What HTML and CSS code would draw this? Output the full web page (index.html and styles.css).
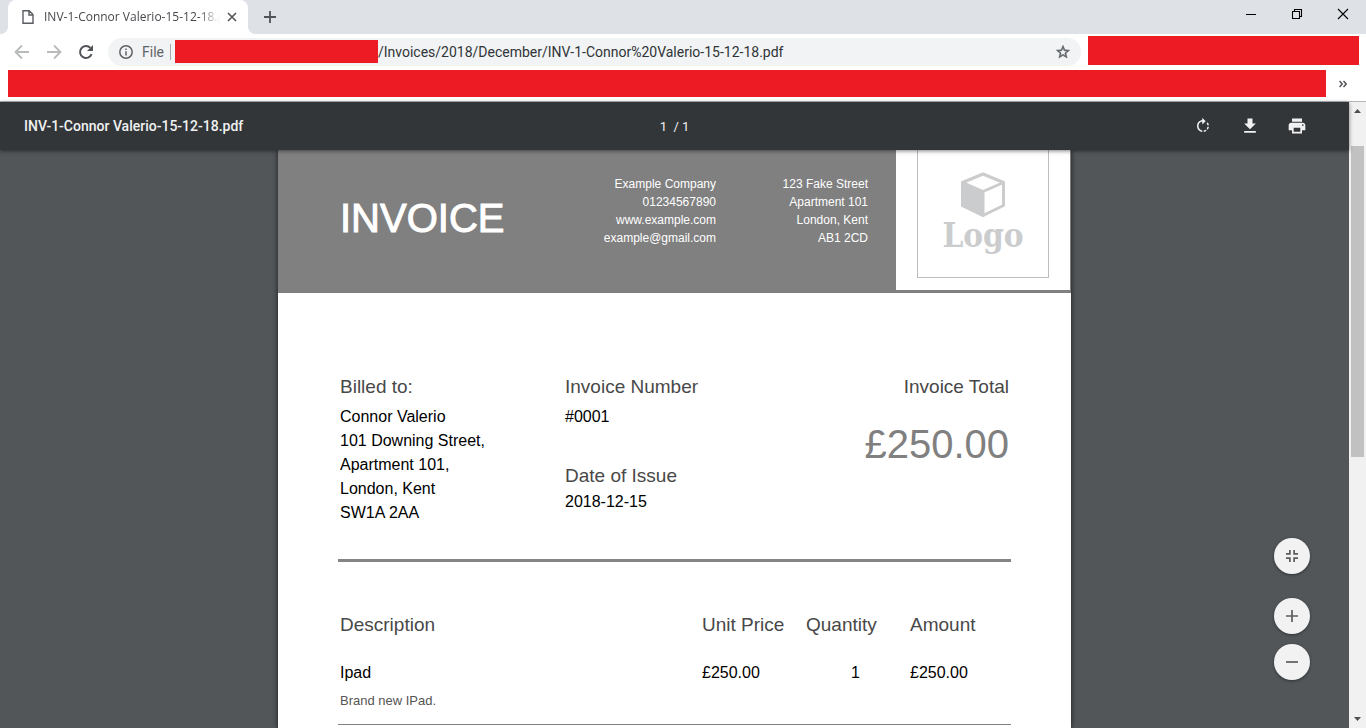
FILE: index.html
```html
<!DOCTYPE html>
<html lang="en">
<head>
<meta charset="utf-8">
<title>INV-1-Connor Valerio-15-12-18.pdf</title>
<link rel="stylesheet" href="styles.css">
</head>
<body class="browser">
<header class="tabstrip">
  <div class="tab">
    <svg class="tab-icon" width="12" height="14" viewBox="0 0 12 14" fill="none" stroke="#5a5d61" stroke-width="1.4"><path d="M1 .8h6.2L11 4.6v8.6H1zM7 1v4h4"/></svg>
    <span class="tab-title">INV-1-Connor Valerio-15-12-18.pdf</span>
    <button class="icon-btn tab-close" aria-label="Close tab"><svg width="10" height="10" viewBox="0 0 10 10" stroke="#55585c" stroke-width="1.7"><path d="M1 1l8 8M9 1l-8 8"/></svg></button>
  </div>
  <button class="icon-btn new-tab" aria-label="New tab"><svg width="12" height="12" viewBox="0 0 12 12" stroke="#505357" stroke-width="1.8"><path d="M6 0v12M0 6h12"/></svg></button>
  <div class="window-controls">
    <button class="icon-btn" aria-label="Minimise"><svg width="12" height="12" viewBox="0 0 12 12" stroke="#000"><path d="M1 6.5h10"/></svg></button>
    <button class="icon-btn" aria-label="Restore"><svg width="12" height="12" viewBox="0 0 12 12" fill="none" stroke="#000" stroke-width="1.1"><path d="M1.5 3.5h7v7h-7zM3.5 3.500V1.500h7v7h-2"/></svg></button>
    <button class="icon-btn" aria-label="Close window"><svg width="12" height="12" viewBox="0 0 12 12" stroke="#000" stroke-width="1.1"><path d="M1 1l10 10M11 1L1 11"/></svg></button>
  </div>
</header>
<nav class="toolbar">
  <button class="icon-btn nav-btn" aria-label="Back"><svg width="16" height="16" viewBox="0 0 16 16" fill="none" stroke="#b9babc" stroke-width="1.8"><path d="M15 8H2M8 1.500L1.500 8 8 14.500"/></svg></button>
  <button class="icon-btn nav-btn" aria-label="Forward"><svg width="16" height="16" viewBox="0 0 16 16" fill="none" stroke="#b9babc" stroke-width="1.8"><path d="M1 8h13M8 1.500L14.500 8 8 14.500"/></svg></button>
  <button class="icon-btn nav-btn" aria-label="Reload"><svg width="16" height="16" viewBox="0 0 16 16" fill="none" stroke="#505357" stroke-width="2"><path d="M13.600 10.200A6 6 0 1 1 12.400 3.900"/><path d="M15 1v6H9z" fill="#505357" stroke="none"/></svg></button>
  <div class="omnibox">
    <svg width="14" height="14" viewBox="0 0 14 14" fill="none" stroke="#5f6368" stroke-width="1.5"><circle cx="7" cy="7" r="6.200"/><path d="M7 6.200v4.200M7 3.500v1.500"/></svg>
    <span class="scheme">File</span>
    <span class="divider"></span>
    <span class="redaction redaction-url"></span>
    <input class="url" type="text" aria-label="Address" value="/Invoices/2018/December/INV-1-Connor%20Valerio-15-12-18.pdf">
    <button class="icon-btn star" aria-label="Bookmark this page"><svg width="16" height="16" viewBox="0 0 24 24" fill="#5f6368" stroke="#5f6368" stroke-width=".8"><path d="M22 9.240l-7.190-.62L12 2 9.190 8.630 2 9.240l5.460 4.730L5.820 21 12 17.270 18.180 21l-1.630-7.030L22 9.240zM12 15.400l-3.760 2.270 1-4.280-3.320-2.880 4.380-.38L12 6.100l1.710 4.040 4.380.38-3.320 2.880 1 4.280L12 15.400z"/></svg></button>
  </div>
  <div class="redaction redaction-extensions"></div>
</nav>
<nav class="bookmarks">
  <div class="redaction redaction-bookmarks"></div>
  <button class="icon-btn more" aria-label="More bookmarks"><svg width="8" height="8" viewBox="0 0 8 8" fill="none" stroke="#505357" stroke-width="1.500"><path d="M.5 1l2.700 3L.5 7M4.500 1l2.700 3-2.700 3"/></svg></button>
</nav>
<div class="content">
  <div class="viewer">
    <header class="pdf-bar">
      <h1 class="pdf-title">INV-1-Connor Valerio-15-12-18.pdf</h1>
      <span class="page-count">1&nbsp; /&nbsp;1</span>
      <div class="pdf-actions">
        <button class="icon-btn pdf-btn" aria-label="Rotate"><svg width="18" height="18" viewBox="0 0 24 24" fill="#f1f1f1"><path d="M15.550 5.550L11 1v3.070C7.060 4.560 4 7.920 4 12s3.050 7.440 7 7.930v-2.020c-2.840-.48-5-2.940-5-5.910s2.160-5.430 5-5.910V10l4.550-4.450zM19.930 11c-.17-1.390-.72-2.730-1.620-3.890l-1.420 1.420c.54.75.88 1.600 1.020 2.470h2.020zM13 17.900v2.020c1.390-.17 2.740-.71 3.900-1.610l-1.440-1.440c-.75.54-1.590.89-2.460 1.030zm3.890-2.420l1.420 1.410c.9-1.160 1.450-2.500 1.620-3.890h-2.020c-.14.870-.48 1.720-1.020 2.480z"/></svg></button>
        <button class="icon-btn pdf-btn" aria-label="Download"><svg width="20" height="20" viewBox="0 0 24 24" fill="#f1f1f1"><path d="M19 9h-4V3H9v6H5l7 7 7-7zM5 18v2h14v-2H5z"/></svg></button>
        <button class="icon-btn pdf-btn" aria-label="Print"><svg width="20" height="20" viewBox="0 0 24 24" fill="#f1f1f1"><path d="M19 8H5c-1.660 0-3 1.340-3 3v6h4v4h12v-4h4v-6c0-1.660-1.340-3-3-3zm-3 11H8v-5h8v5zm3-7c-.55 0-1-.45-1-1s.45-1 1-1 1 .45 1 1-.45 1-1 1zm-1-9H6v4h12V3z"/></svg></button>
      </div>
    </header>
    <main class="stage">
      <article class="sheet">
        <header class="banner">
          <h2 class="banner-title">INVOICE</h2>
          <address class="contact">Example Company<br>01234567890<br>www.example.com<br>example@gmail.com</address>
          <address class="contact contact-address">123 Fake Street<br>Apartment 101<br>London, Kent<br>AB1 2CD</address>
          <div class="logo">
            <div class="logo-frame">
              <svg width="46" height="46" viewBox="0 0 46 46" fill="none" stroke="#cbccce" stroke-width="3" stroke-linejoin="round"><path d="M23 2L43.500 10.500V33.500L23 43.500 2.500 33.500V10.500z"/><path d="M23 19.500l20.500-9"/><path d="M2.500 10.500l20.500 9V43.500L2.500 33.500z" fill="#cbccce"/></svg>
              <span class="logo-text">Logo</span>
            </div>
          </div>
        </header>
        <section class="summary">
          <div>
            <h3 class="label">Billed to:</h3>
            <p class="value">Connor Valerio<br>101 Downing Street,<br>Apartment 101,<br>London, Kent<br>SW1A 2AA</p>
          </div>
          <div>
            <h3 class="label">Invoice Number</h3>
            <p class="value">#0001</p>
            <h3 class="label label-date">Date of Issue</h3>
            <p class="value value-date">2018-12-15</p>
          </div>
          <div class="total">
            <h3 class="label">Invoice Total</h3>
            <p class="total-amount">£250.00</p>
          </div>
        </section>
        <table class="items">
          <thead>
            <tr><th class="col-desc">Description</th><th class="col-price">Unit Price</th><th class="col-qty">Quantity</th><th class="col-amount">Amount</th></tr>
          </thead>
          <tbody>
            <tr><td>Ipad<p class="note">Brand new IPad.</p></td><td>£250.00</td><td class="qty">1</td><td>£250.00</td></tr>
          </tbody>
        </table>
      </article>
    </main>
    <div class="zoom-controls">
      <button class="zoom-btn zoom-fit" aria-label="Fit to page"><svg width="12" height="12" viewBox="0 0 12 12" fill="none" stroke="#5c5c5c" stroke-width="1.700"><path d="M0 3.900h3.900V0M8.100 0v3.900H12M0 8.100h3.900V12M8.100 12V8.100H12"/></svg></button>
      <button class="zoom-btn" aria-label="Zoom in"><svg width="12" height="12" viewBox="0 0 12 12" stroke="#5c5c5c" stroke-width="1.700"><path d="M6 0v12M0 6h12"/></svg></button>
      <button class="zoom-btn" aria-label="Zoom out"><svg width="12" height="12" viewBox="0 0 12 12" stroke="#5c5c5c" stroke-width="1.700"><path d="M0 6h12"/></svg></button>
    </div>
  </div>
  <div class="scrollbar">
    <svg width="17" height="17" viewBox="0 0 17 17" fill="#505050"><path d="M5 11l3.500-4 3.500 4z"/></svg>
    <div class="track"><div class="thumb"></div></div>
    <svg width="17" height="17" viewBox="0 0 17 17" fill="#505050"><path d="M5 6l3.500 4L12 6z"/></svg>
  </div>
</div>
</body>
</html>
```
FILE: styles.css
```css
* { box-sizing: border-box; }
h1, h2, h3, p { margin: 0; font-weight: 400; }
svg { display: block; flex: none; }

.browser {
  margin: 0;
  height: 100vh;
  display: flex;
  flex-direction: column;
  overflow: hidden;
  background: #fff;
  font-family: "Open Sans", "Noto Sans", sans-serif;
}
.icon-btn {
  display: flex;
  align-items: center;
  justify-content: center;
  padding: 0;
  border: 0;
  background: none;
}
.redaction { background: #ed1c24; }

/* Tab strip */
.tabstrip {
  flex: none;
  height: 34px;
  display: flex;
  padding-left: 8px;
  background: #dee1e6;
}
.tab {
  position: relative;
  width: 240px;
  display: flex;
  align-items: center;
  padding: 0 10px 0 14px;
  border-radius: 8px 8px 0 0;
  background: #fff;
}
.tab::before, .tab::after {
  content: "";
  position: absolute;
  bottom: 0;
  width: 8px;
  height: 8px;
}
.tab::before { right: 100%; background: radial-gradient(circle at 0 0, #dee1e6 8px, #fff 8px); }
.tab::after { left: 100%; background: radial-gradient(circle at 100% 0, #dee1e6 8px, #fff 8px); }
.tab-title {
  flex: 1;
  margin-left: 10px;
  overflow: hidden;
  white-space: nowrap;
  font-size: 12px;
  line-height: 16px;
  color: #45484c;
  mask-image: linear-gradient(to right, #000 88%, transparent);
}
.tab-close { width: 12px; height: 12px; margin-left: 6px; }
.new-tab { width: 28px; margin-left: 8px; }
.window-controls { display: flex; margin-left: auto; height: 28px; }
.window-controls .icon-btn { width: 46px; }

/* Address row */
.toolbar {
  flex: none;
  height: 34px;
  display: flex;
  align-items: center;
  padding: 2px 7px 0 6px;
}
.nav-btn { width: 32px; height: 28px; }
.omnibox {
  flex: 1;
  height: 28px;
  display: flex;
  align-items: center;
  margin-left: 6px;
  padding: 0 10px 0 11px;
  border-radius: 14px;
  background: #f1f3f4;
  font-family: Roboto, sans-serif;
  font-size: 14px;
}
.scheme { margin-left: 9px; color: #5f6368; }
.divider { width: 1px; height: 16px; margin: 0 4px 0 6px; background: #a8abae; }
.redaction-url { width: 203px; height: 23px; margin-bottom: 2px; }
.url {
  flex: 1;
  min-width: 0;
  padding: 0;
  border: 0;
  outline: 0;
  background: none;
  font: inherit;
  color: #303338;
}
.redaction-extensions { width: 271px; height: 29px; margin: 0 0 4px 7px; }
.bookmarks {
  flex: none;
  height: 34px;
  display: flex;
  align-items: center;
  padding: 0 0 2px 8px;
  border-bottom: 1px solid #b4b6b8;
}
.redaction-bookmarks { flex: 1; height: 27px; }
.more { width: 40px; height: 27px; padding-right: 6px; }

/* PDF viewer */
.content { flex: 1; min-height: 0; display: flex; }
.viewer {
  position: relative;
  flex: 1;
  min-width: 0;
  display: flex;
  flex-direction: column;
  background: #525659;
}
.pdf-bar {
  position: relative;
  z-index: 1;
  flex: none;
  height: 48px;
  display: grid;
  grid-template-columns: 1fr auto 1fr;
  align-items: center;
  padding: 0 24px;
  background: #323639;
  box-shadow: 0 1px 4px rgba(0, 0, 0, .5);
  font-family: Roboto, sans-serif;
  color: #f1f1f1;
}
.pdf-title { font-size: 14px; font-weight: 500; }
.page-count { font-size: 13px; }
.pdf-actions { display: flex; justify-content: flex-end; gap: 11px; padding-right: 10px; }
.pdf-btn { width: 36px; height: 36px; }
.stage { flex: 1; min-height: 0; display: flex; justify-content: center; overflow: hidden; }
.sheet {
  width: min(793px, 100%);
  background: #fff;
  box-shadow: 0 0 5px rgba(0, 0, 0, .7);
  font-family: "Liberation Sans", Arial, sans-serif;
}

/* Invoice */
.banner {
  display: flex;
  height: 143px;
  padding: 0 1px 3px 62px;
  background: #808080;
  color: #fff;
}
.banner-title {
  flex: 1;
  padding-top: 45px;
  font-size: 40px;
  line-height: 46px;
  -webkit-text-stroke: 1px #fff;
}
.contact {
  padding-top: 25px;
  font-size: 12px;
  line-height: 18px;
  font-style: normal;
  text-align: right;
}
.contact-address { width: 152px; margin-right: 28px; }
.logo { width: 174px; padding: 0 21px 12px; background: #fff; }
.logo-frame {
  height: 100%;
  display: flex;
  flex-direction: column;
  align-items: center;
  padding-top: 22px;
  border: 1px solid #bdbdbd;
  border-top: 0;
}
.logo-text {
  font-family: "DejaVu Serif Condensed", "DejaVu Serif", serif;
  font-size: 33px;
  font-weight: 700;
  line-height: 36px;
  color: #cbccce;
}
.summary {
  display: grid;
  grid-template-columns: 225px 1fr auto;
  margin: 0 60px;
  padding: 82px 2px 34px;
  border-bottom: 3px solid #858585;
}
.label { font-size: 19px; line-height: 24px; color: #484848; }
.value { margin-top: 6px; font-size: 16px; line-height: 24px; color: #000; }
.label-date { margin-top: 35px; }
.value-date { margin-top: 2px; }
.total { text-align: right; }
.total-amount { margin-top: 22px; font-size: 40px; line-height: 46px; color: #808080; }
.items {
  width: calc(100% - 120px);
  margin: 51px 60px 0;
  border-collapse: collapse;
  table-layout: fixed;
}
.items th {
  padding: 0;
  text-align: left;
  font-size: 19px;
  font-weight: 400;
  line-height: 24px;
  color: #484848;
}
.items td {
  padding: 24px 0 14px;
  border-bottom: 1px solid #808080;
  vertical-align: top;
  font-size: 16px;
  line-height: 24px;
  color: #000;
}
.items th:first-child, .items td:first-child { padding-left: 2px; }
.col-price, .col-qty { width: 104px; }
.col-amount { width: 101px; }
.items .qty { padding-right: 50px; text-align: right; }
.note { margin-top: 7px; font-size: 13px; line-height: 18px; color: #555; }

/* Floating zoom buttons */
.zoom-controls {
  position: absolute;
  right: 39px;
  bottom: 48px;
  display: flex;
  flex-direction: column;
  gap: 10px;
}
.zoom-btn {
  width: 36px;
  height: 36px;
  display: flex;
  align-items: center;
  justify-content: center;
  padding: 0;
  border: 0;
  border-radius: 50%;
  background: #f2f2f2;
  box-shadow: 0 1px 3px rgba(0, 0, 0, .4);
}
.zoom-fit { margin-bottom: 14px; }

/* Scrollbar */
.scrollbar { flex: none; width: 17px; display: flex; flex-direction: column; background: #f1f1f1; }
.track { flex: 1; padding: 27px 2px 0; }
.thumb { height: 55%; background: #c1c1c1; }
```
